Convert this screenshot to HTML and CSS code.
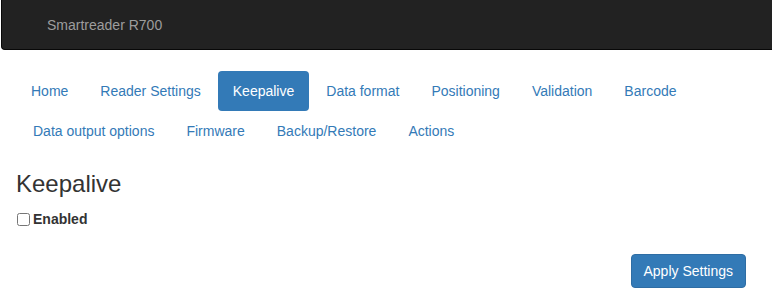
FILE: index.html
```html
<!DOCTYPE html>
<html>
<head>
<meta charset="utf-8">
<link rel="stylesheet" href="styles.css">
</head>
<body>
<div class="navbar"><span class="brand">Smartreader R700</span></div>
<div class="main">
  <ul class="pills">
    <li><a>Home</a></li>
    <li><a>Reader Settings</a></li>
    <li class="active"><a>Keepalive</a></li>
    <li><a>Data format</a></li>
    <li><a>Positioning</a></li>
    <li><a>Validation</a></li>
    <li><a>Barcode</a></li>
    <li><a>Data output options</a></li>
    <li><a>Firmware</a></li>
    <li><a>Backup/Restore</a></li>
    <li><a>Actions</a></li>
  </ul>
  <h3 class="title">Keepalive</h3>
  <label class="check"><input type="checkbox"><span>Enabled</span></label>
  <div class="actions"><button class="btn">Apply Settings</button></div>
</div>
</body>
</html>
```
FILE: styles.css
```css
html, body {
  margin: 0;
  padding: 0;
  background: #fff;
  font-family: "Liberation Sans", Arial, sans-serif;
  font-size: 14px;
  color: #333;
}
.navbar {
  margin-left: 1px;
  height: 49px;
  background: #222;
  border: 1px solid #080808;
  border-top: none;
  border-right: none;
  border-bottom-left-radius: 4px;
  display: flex;
  align-items: center;
}
.brand {
  padding-left: 45px;
  color: #9d9d9d;
  font-size: 14px;
  line-height: 20px;
}
.main {
  padding: 0 26px 0 16px;
}
.pills {
  list-style: none;
  margin: 21px 0 0 0;
  padding: 0;
  display: flex;
  flex-wrap: wrap;
  max-width: 700px;
}
.pills li + li {
  margin-left: 2px;
}
.pills a {
  display: block;
  padding: 10px 15px;
  line-height: 20px;
  color: #337ab7;
  border-radius: 4px;
  cursor: pointer;
}
.pills .active a {
  background: #337ab7;
  color: #fff;
}
.title {
  margin: 20px 0 12px 0;
  font-size: 24px;
  font-weight: 500;
  line-height: 26.4px;
  color: #333;
}
.check {
  display: flex;
  align-items: center;
  height: 20px;
  font-weight: bold;
  color: #333;
}
.check input {
  margin: 0 3px 0 1px;
  width: 13px;
  height: 13px;
}
.actions {
  display: flex;
  justify-content: flex-end;
  margin-top: 25px;
}
.btn {
  font-family: "Liberation Sans", Arial, sans-serif;
  font-size: 14px;
  line-height: 20px;
  padding: 6px 12px;
  color: #fff;
  background: #337ab7;
  border: 1px solid #2e6da4;
  border-radius: 4px;
}
```
